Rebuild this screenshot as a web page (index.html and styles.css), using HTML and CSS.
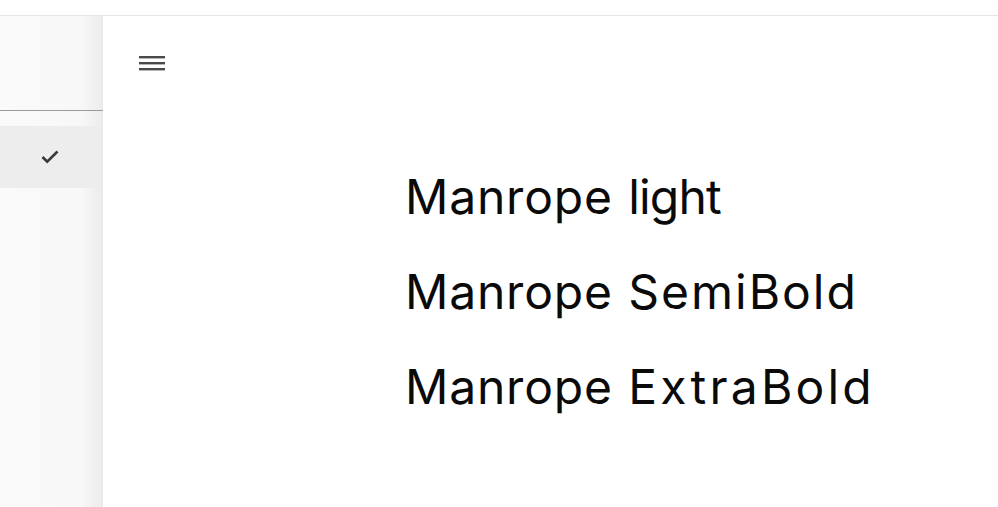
FILE: index.html
```html
<!DOCTYPE html>
<html>
<head>
<meta charset="utf-8">
<link rel="stylesheet" href="styles.css">
</head>
<body>
<div class="topbar"></div>
<div class="layout">
  <aside class="sidebar">
    <div class="sidebar-head"></div>
    <div class="sidebar-list">
      <div class="item selected">
        <svg class="check" width="18" height="14" viewBox="0 0 18 14"><path d="M1.5 7 L6.2 11.6 L16.5 1.5" fill="none" stroke="#3a3a3a" stroke-width="2.7"/></svg>
      </div>
    </div>
  </aside>
  <main class="main">
    <div class="toolbar">
      <svg class="menu" width="26" height="15" viewBox="0 0 26 15"><rect x="0" y="0" width="26" height="2.4" fill="#4a4a4a"/><rect x="0" y="6" width="26" height="2.4" fill="#4a4a4a"/><rect x="0" y="12" width="26" height="2.4" fill="#4a4a4a"/></svg>
    </div>
    <div class="samples">
      <p class="sample"><span class="word">Manrope</span> <span class="word narrow">light</span></p>
      <p class="sample"><span class="word">Manrope</span> <span class="word wide">SemiBold</span></p>
      <p class="sample"><span class="word">Manrope</span> <span class="word wider">ExtraBold</span></p>
    </div>
  </main>
</div>
</body>
</html>
```
FILE: styles.css
```css
html, body {
  margin: 0;
  padding: 0;
  background: #fff;
  height: 100%;
  overflow: hidden;
}
body {
  font-family: Inter, "Open Sans", sans-serif;
}
.topbar {
  height: 15px;
  border-bottom: 1px solid #e6e6e6;
}
.layout {
  display: flex;
  height: calc(100% - 16px);
}
.sidebar {
  width: 103px;
  flex: none;
  background: linear-gradient(to right, #fafafa 0, #f8f8f8 80px, #ededed 100px, #e9e9e9 103px);
}
.sidebar-head {
  height: 94px;
  border-bottom: 1px solid #9a9a9a;
}
.sidebar-list {
  padding-top: 15px;
}
.item {
  width: 100px;
  height: 62px;
  display: flex;
  align-items: center;
  justify-content: flex-end;
  box-sizing: border-box;
  padding-right: 41px;
}
.item.selected {
  background: #ededed;
}
.check {
  display: block;
}
.main {
  flex: 1;
  padding-left: 36px;
}
.toolbar {
  padding-top: 40px;
  height: 15px;
}
.menu {
  display: block;
}
.samples {
  padding-left: 266px;
  padding-top: 78px;
}
.sample {
  margin: 0;
  font-size: 48px;
  line-height: 95px;
  font-weight: 400;
  color: #0a0a0a;
  word-spacing: 2px;
}
.word {
  letter-spacing: 0.8px;
}
.word.narrow {
  letter-spacing: -0.8px;
}
.word.wide {
  letter-spacing: 2px;
}
.word.wider {
  letter-spacing: 3.2px;
}
```
